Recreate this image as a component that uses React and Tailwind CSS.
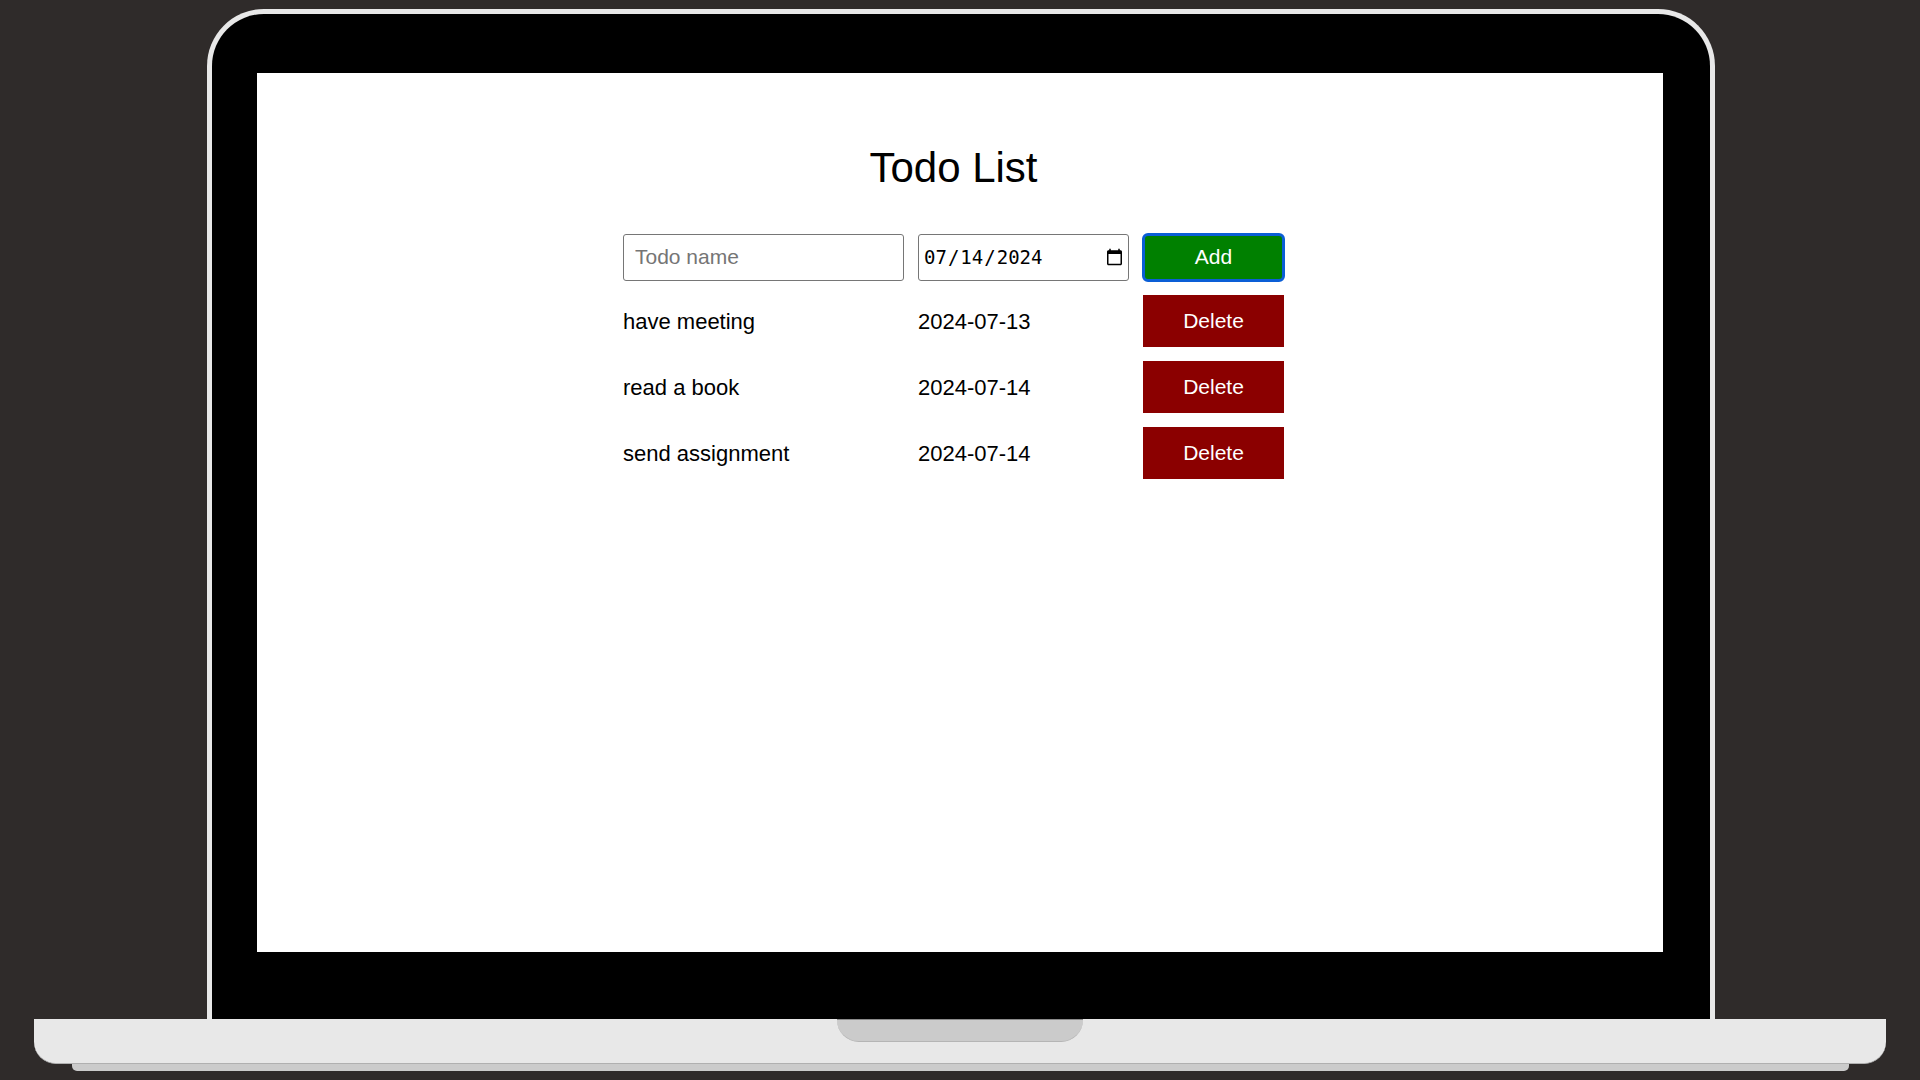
import { useState } from "react";

const initialTodos = [
  { name: "have meeting", dueDate: "2024-07-13" },
  { name: "read a book", dueDate: "2024-07-14" },
  { name: "send assignment", dueDate: "2024-07-14" },
];

function TodoList() {
  const [todos, setTodos] = useState(initialTodos);
  const [name, setName] = useState("");
  const [dueDate, setDueDate] = useState("2024-07-14");

  const addTodo = (event) => {
    event.preventDefault();
    setTodos([...todos, { name, dueDate }]);
    setName("");
  };

  const deleteTodo = (index) => setTodos(todos.filter((_, i) => i !== index));

  return (
    <main className="flex flex-col items-center pt-[69px] pr-[13px]">
      <h1 className="text-[42px] leading-[52px]">Todo List</h1>
      <form
        onSubmit={addTodo}
        className="mt-[40px] grid grid-cols-[281px_211px_141px] gap-x-[14px]"
      >
        <input
          type="text"
          aria-label="Todo name"
          placeholder="Todo name"
          value={name}
          onChange={(event) => setName(event.target.value)}
          className="h-[47px] w-full rounded-[3px] border border-[#767676] bg-white px-[11px] pb-[2px] text-[21px] placeholder:text-[#757575]"
        />
        <input
          type="date"
          aria-label="Due date"
          value={dueDate}
          onChange={(event) => setDueDate(event.target.value)}
          className="h-[47px] w-full rounded-[3px] border border-[#767676] bg-white pr-[2px] pl-[4px] font-['DejaVu_Sans_Mono',monospace] text-[19px]"
        />
        <button
          type="submit"
          className="h-[47px] rounded-[5px] bg-[#008000] pb-[2px] text-[21px] text-white outline-3 -outline-offset-2 outline-[#0a5ed6]"
        >
          Add
        </button>
      </form>
      <ul className="mt-[14px] flex flex-col gap-[14px]">
        {todos.map((todo, index) => (
          <li
            key={index}
            className="grid grid-cols-[281px_211px_141px] items-center gap-x-[14px] text-[22px]"
          >
            <span>{todo.name}</span>
            <span>{todo.dueDate}</span>
            <button
              type="button"
              onClick={() => deleteTodo(index)}
              className="h-[52px] bg-[#8b0000] text-[21px] text-white"
            >
              Delete
            </button>
          </li>
        ))}
      </ul>
    </main>
  );
}

export default function App() {
  return (
    <div className="flex min-h-screen flex-col bg-[#2f2b2a] px-[34px] py-[9px] font-['Liberation_Sans',Arial,sans-serif] text-black">
      <div className="mr-[171px] ml-[173px] flex flex-1 flex-col rounded-t-[57px] border-x-5 border-t-5 border-[#e8e8e8] bg-black pt-[59px] pr-[47px] pb-[67px] pl-[45px]">
        <div className="flex-1 bg-white">
          <TodoList />
        </div>
      </div>
      <div className="h-[45px] rounded-b-[22px] border-b border-[#b0b0b0] bg-[#e8e8e8]">
        <div className="mx-auto h-[23px] w-[246px] rounded-b-[22px] border-t border-b border-t-[#8a8a8a] border-b-[#b5b5b5] bg-[#cbcbcb]" />
      </div>
      <div className="mr-[37px] ml-[38px] h-[7px] rounded-b-[5px] bg-[#cbcbcb]" />
    </div>
  );
}
